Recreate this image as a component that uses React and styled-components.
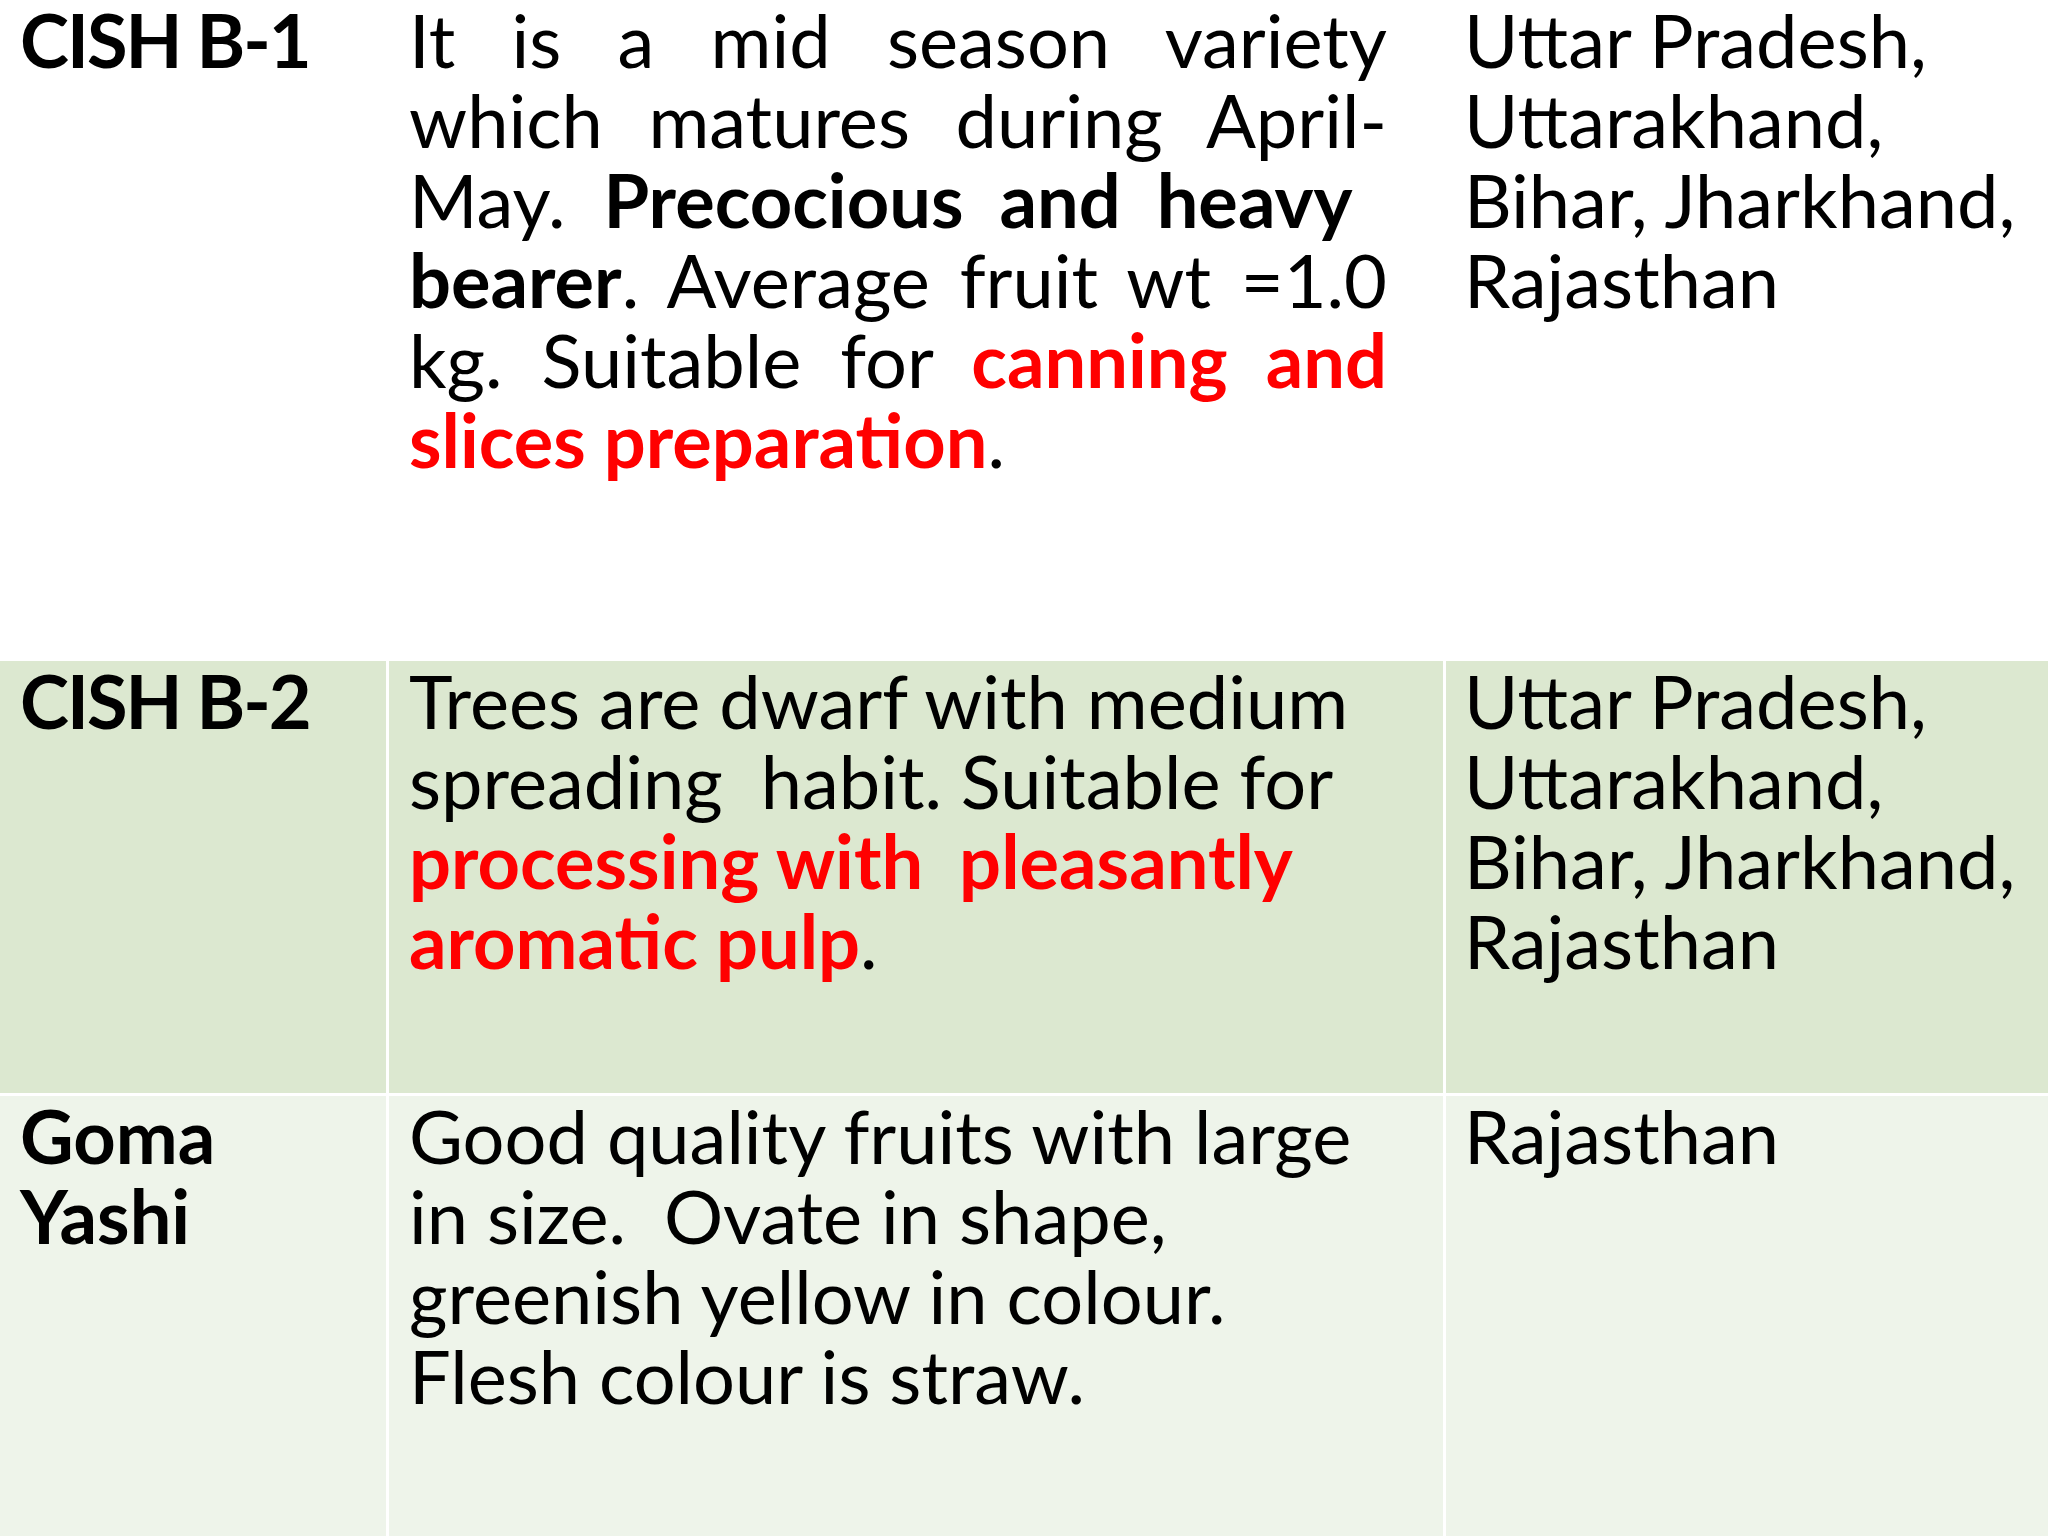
import React from "react";
import styled, { createGlobalStyle } from "styled-components";

const GlobalStyle = createGlobalStyle`
  html, body {
    margin: 0;
    padding: 0;
    background: #ffffff;
  }
  body {
    font-family: Lato, "Noto Sans", sans-serif;
    color: #000000;
  }
`;

const Table = styled.div`
  width: 2048px;
  height: 1536px;
  display: grid;
  grid-template-columns: 386px 1054px 1fr;
  grid-template-rows: 658px 432px 1fr;
  gap: 3px;
  background: #ffffff;
  overflow: hidden;
`;

const Cell = styled.div`
  background: ${(p) => p.$bg};
  padding: 0 ${(p) => p.$padRight || 20}px 0 ${(p) => p.$padLeft || 20}px;
  font-size: 74px;
  line-height: 80px;
`;

const Name = styled.div`
  font-weight: 700;
  letter-spacing: ${(p) => (p.$tight ? "-2px" : "0")};
`;

const Line = styled.div`
  white-space: pre;
`;

const JustLine = styled.div`
  text-align: justify;
  text-align-last: justify;
`;

const Bold = styled.b`
  font-weight: 700;
`;

const Red = styled.span`
  color: #ff0000;
  font-weight: 700;
`;

const rows = [
  {
    bg: "#ffffff",
    name: ["CISH B-1"],
    states: ["Uttar Pradesh,", "Uttarakhand,", "Bihar, Jharkhand,", "Rajasthan"],
  },
  {
    bg: "#dce8d0",
    name: ["CISH B-2"],
    states: ["Uttar Pradesh,", "Uttarakhand,", "Bihar, Jharkhand,", "Rajasthan"],
  },
  {
    bg: "#eef4ea",
    name: ["Goma", "Yashi"],
    states: ["Rajasthan"],
  },
];

const descriptions = [
  <>
    <JustLine>It is a mid season variety</JustLine>
    <JustLine>which matures during April-</JustLine>
    <Line>
      May.  <Bold>Precocious  and  heavy</Bold>
    </Line>
    <JustLine>
      <Bold>bearer</Bold>. Average fruit wt =1.0
    </JustLine>
    <JustLine>
      kg. Suitable for <Red>canning and</Red>
    </JustLine>
    <Line>
      <Red>slices preparation</Red>.
    </Line>
  </>,
  <>
    <Line>Trees are dwarf with medium</Line>
    <Line>spreading  habit. Suitable for</Line>
    <Line>
      <Red>processing with  pleasantly</Red>
    </Line>
    <Line>
      <Red>aromatic pulp</Red>.
    </Line>
  </>,
  <>
    <Line>Good quality fruits with large</Line>
    <Line>in size.  Ovate in shape,</Line>
    <Line>greenish yellow in colour.</Line>
    <Line>Flesh colour is straw.</Line>
  </>,
];

export default function App() {
  return (
    <>
      <GlobalStyle />
      <Table>
        {rows.map((row, i) => (
          <React.Fragment key={i}>
            <Cell $bg={row.bg}>
              {row.name.map((n) => (
                <Name key={n} $tight={n.startsWith("CISH")}>
                  {n}
                </Name>
              ))}
            </Cell>
            <Cell $bg={row.bg} $padLeft={20} $padRight={56}>
              {descriptions[i]}
            </Cell>
            <Cell $bg={row.bg} $padLeft={18}>
              {row.states.map((s) => (
                <Line key={s}>{s}</Line>
              ))}
            </Cell>
          </React.Fragment>
        ))}
      </Table>
    </>
  );
}
